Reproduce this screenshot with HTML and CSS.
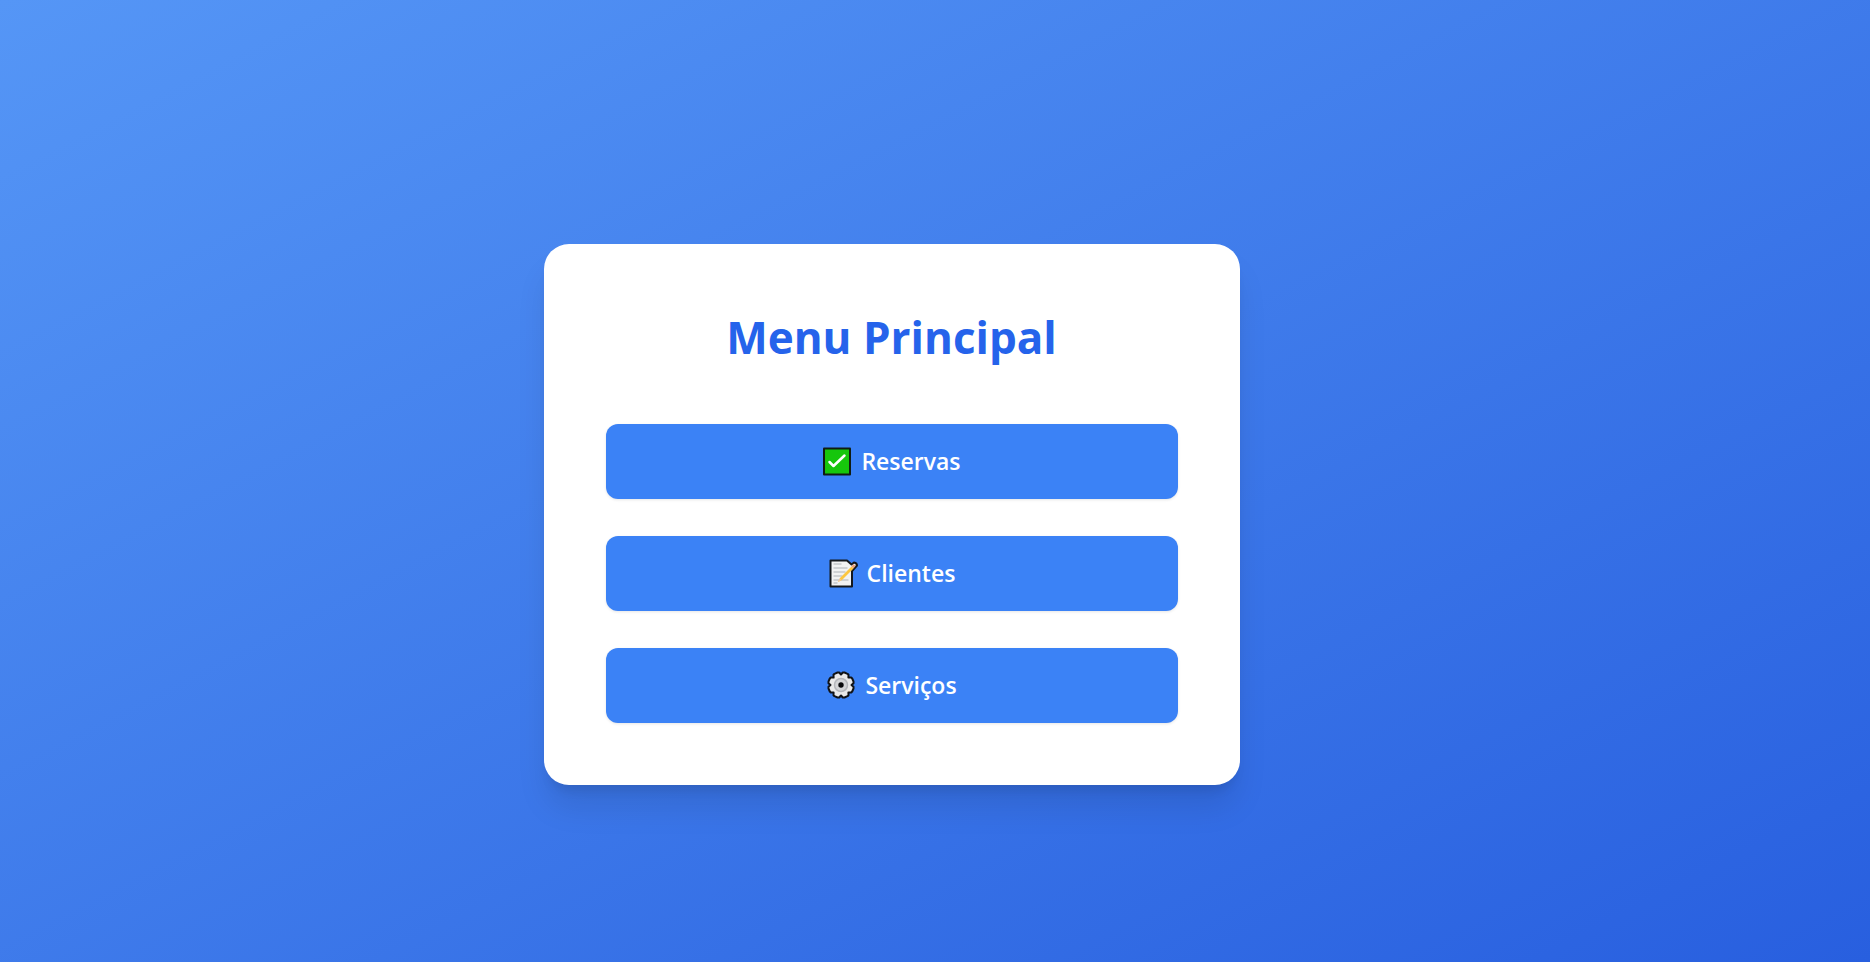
FILE: index.html
```html
<!DOCTYPE html>
<html lang="pt-BR">
<head>
<meta charset="utf-8">
<meta name="viewport" content="width=device-width, initial-scale=1">
<title>Menu Principal</title>
<link rel="stylesheet" href="styles.css">
</head>
<body>
<main class="page">
  <section class="card">
    <h1 class="card-title">Menu Principal</h1>
    <nav class="menu">
      <button class="menu-button" type="button">
        <svg class="icon" viewBox="0 0 30 30" aria-hidden="true">
          <rect x="1" y="1.500" width="28" height="28" rx="1" fill="#101c12"/>
          <rect x="3" y="3.500" width="24" height="24" fill="#16c60c"/>
          <path d="M7.500 16l4 4L22.500 9.500" fill="none" stroke="#fff" stroke-width="2.500" stroke-linecap="round" stroke-linejoin="round"/>
        </svg>
        <span>Reservas</span>
      </button>
      <button class="menu-button" type="button">
        <svg class="icon" viewBox="0 0 30 30" aria-hidden="true">
          <path d="M2.500 2.500h16.500l4.500 4 2.500-2q3 .5 3 3L24 13v15.500H2.500z" fill="#f2f2f2" stroke="#15181c" stroke-width="2" stroke-linejoin="round"/>
          <path d="M5.500 6h8M5.500 10h14M5.500 14h12M5.500 18h9M5.500 22h15M5.500 25h4" stroke="#c5c7ca" stroke-width="1.500"/>
          <path d="M10 24l2-4L23.500 8.500l2 2L14 22z" fill="#fcc640"/>
          <path d="M23.500 8.500l2-2.500 2 2-2 2.500z" fill="#e9a27d"/>
          <path d="M10 24l1.500-3.500 2 1.500z" fill="#efc5a5"/>
        </svg>
        <span>Clientes</span>
      </button>
      <button class="menu-button" type="button">
        <svg class="icon" viewBox="0 0 30 30" aria-hidden="true">
          <path d="M11.500 2.500h1.700l1.800 2 1.800-2h1.700l3 1.300 1 1-.1 2.800 2.800-.1 1 1 1.300 3v1.700l-2 1.800 2 1.800v1.700l-1.300 3-1 1-2.800-.1.100 2.800-1 1-3 1.300h-1.700l-1.800-2-1.800 2h-1.700l-3-1.300-1-1 .1-2.800-2.800.1-1-1-1.300-3v-1.700l2-1.800-2-1.800v-1.700l1.300-3 1-1 2.800.1-.1-2.800 1-1z" fill="#e9e9e9" stroke="#111316" stroke-width="2" stroke-linejoin="round"/>
          <circle cx="15" cy="15" r="6.500" fill="#d3d4d6" stroke="#b4b6ba" stroke-width="1.500"/>
          <circle cx="15" cy="15" r="2.700" fill="#08090b"/>
        </svg>
        <span>Serviços</span>
      </button>
    </nav>
  </section>
</main>
</body>
</html>
```
FILE: styles.css
```css
* {
  box-sizing: border-box;
}

body {
  margin: 0;
  font-family: "Segoe UI", "Open Sans", "Noto Sans", sans-serif;
}

.page {
  display: flex;
  align-items: center;
  justify-content: center;
  min-height: 100vh;
  padding: 66px 87px 0 0;
  background: linear-gradient(to bottom right, #5596f6, #285fdf);
}

.card {
  width: 100%;
  max-width: 696px;
  padding: 62px;
  border-radius: 25px;
  background: #fff;
  box-shadow: 0 25px 32px -4px rgba(0, 0, 0, 0.1), 0 10px 12px -6px rgba(0, 0, 0, 0.1);
}

.card-title {
  margin: 0 0 56px;
  color: #2563eb;
  font-size: 44px;
  font-weight: 700;
  line-height: 62px;
  text-align: center;
}

.menu {
  display: flex;
  flex-direction: column;
  gap: 37px;
}

.menu-button {
  display: flex;
  align-items: center;
  justify-content: center;
  gap: 9px;
  width: 100%;
  padding: 20px;
  border: 0;
  border-radius: 12px;
  background: #3b82f6;
  box-shadow: 0 1px 3px rgba(0, 0, 0, 0.1);
  color: #fff;
  font: inherit;
  font-size: 23px;
  font-weight: 600;
  line-height: 35px;
  cursor: pointer;
}

.icon {
  width: 30px;
  height: 30px;
}
```
